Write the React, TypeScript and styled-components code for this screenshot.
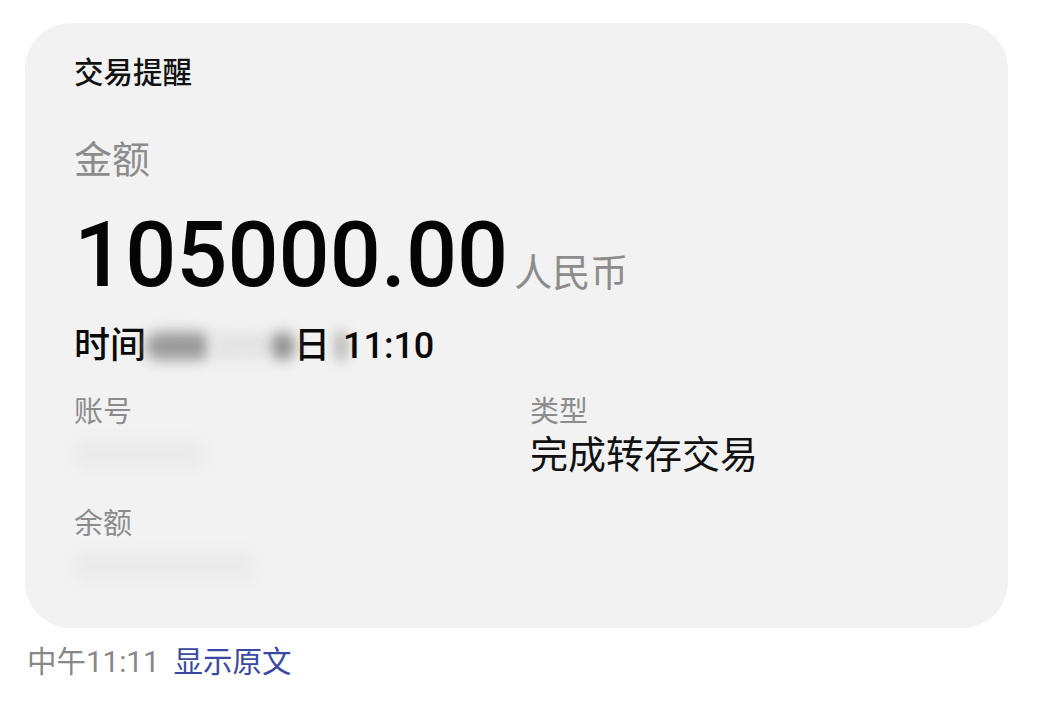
import styled, { createGlobalStyle } from 'styled-components';

const GlobalStyle = createGlobalStyle`
  html, body {
    margin: 0;
    padding: 0;
    background: #ffffff;
    font-family: Roboto, "Noto Sans CJK SC", sans-serif;
  }
`;

const Page = styled.div`
  width: 1038px;
  height: 707px;
  padding: 23px 30px 0 25px;
  box-sizing: border-box;
`;

const Card = styled.div`
  background: #f2f2f2;
  border-radius: 46px;
  height: 605px;
  padding: 50px 49px 0 49px;
  box-sizing: border-box;
  display: flex;
  flex-direction: column;
`;

const Title = styled.div`
  font-size: 29.5px;
  line-height: 40px;
  font-weight: 500;
  color: #111;
  margin-top: -20px;
`;

const Label = styled.div`
  font-size: 29px;
  line-height: 36px;
  color: #8c8c8c;
`;

const AmountLabel = styled(Label)`
  font-size: 38px;
  line-height: 48px;
  margin-top: 43px;
`;

const AmountRow = styled.div`
  display: flex;
  align-items: baseline;
  margin-top: 25px;
  height: 94px;
`;

const Amount = styled.span`
  font-size: 90px;
  line-height: 94px;
  font-weight: 500;
  color: #050505;
`;

const Currency = styled.span`
  font-size: 38px;
  color: #8c8c8c;
  margin-left: 6px;
`;

const TimeRow = styled.div`
  font-size: 36px;
  line-height: 44px;
  font-weight: 500;
  color: #0a0a0a;
  margin-top: 21px;
  display: flex;
  align-items: center;
`;

const Blur = styled.span<{ $w: number; $shade: string }>`
  display: inline-block;
  width: ${(p) => p.$w}px;
  height: 28px;
  background: ${(p) => p.$shade};
  filter: blur(7px);
  border-radius: 12px;
`;

const Grid = styled.div`
  display: grid;
  grid-template-columns: 456px 1fr;
  margin-top: 26px;
  row-gap: 26px;
`;

const Field = styled.div`
  display: flex;
  flex-direction: column;
`;

const Value = styled.div`
  font-size: 38px;
  line-height: 50px;
  color: #111;
`;

const Faint = styled.div<{ $w: number }>`
  width: ${(p) => p.$w}px;
  height: 30px;
  margin-top: 10px;
  background: #ebebeb;
  filter: blur(6px);
  border-radius: 10px;
`;

const Footer = styled.div`
  display: flex;
  align-items: baseline;
  gap: 14px;
  padding: 14px 0 0 2px;
  font-size: 29.5px;
  line-height: 40px;
`;

const Time = styled.span`
  color: #888;
`;

const Link = styled.span`
  color: #3949a3;
`;

export default function App() {
  return (
    <>
      <GlobalStyle />
      <Page>
        <Card>
          <Title>交易提醒</Title>
          <AmountLabel>金额</AmountLabel>
          <AmountRow>
            <Amount>105000.00</Amount>
            <Currency>人民币</Currency>
          </AmountRow>
          <TimeRow>
            时间
            <Blur $w={64} $shade="#9a9a9a" />
            <Blur $w={62} $shade="#e4e4e4" />
            <Blur $w={22} $shade="#8a8a8a" />
            日&nbsp;
            <Blur $w={4} $shade="#333" />
            11:10
          </TimeRow>
          <Grid>
            <Field>
              <Label>账号</Label>
              <Faint $w={130} />
            </Field>
            <Field>
              <Label>类型</Label>
              <Value>完成转存交易</Value>
            </Field>
            <Field>
              <Label>余额</Label>
              <Faint $w={180} />
            </Field>
          </Grid>
        </Card>
        <Footer>
          <Time>中午11:11</Time>
          <Link>显示原文</Link>
        </Footer>
      </Page>
    </>
  );
}
